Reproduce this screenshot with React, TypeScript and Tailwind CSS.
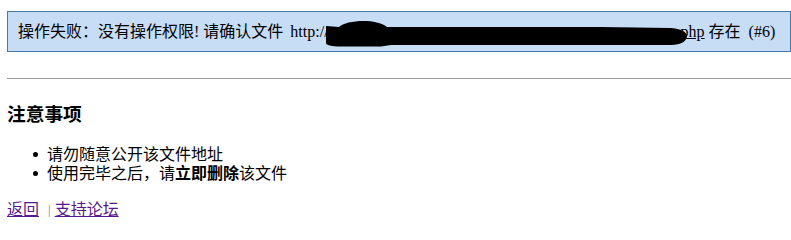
import React from "react";

const FONT = { fontFamily: '"Liberation Serif", "Noto Sans CJK SC", serif' };

export default function App() {
  return (
    <div
      className="w-[791px] h-[232px] overflow-hidden bg-white text-black pl-[7px] pt-[11px] text-[16px]"
      style={FONT}
    >
      <div className="relative w-[784px] h-[41px] border border-[#4a78a3] bg-[#c7dcf5] flex items-center pl-[10px] whitespace-nowrap leading-[20px]">
        <span>操作失败：没有操作权限! 请确认文件</span>
        <span className="ml-[7px]">http://</span>
        <span className="inline-block w-[352px]" />
        <span className="underline">php</span>
        <span className="ml-[4px]">存在</span>
        <span className="ml-[8px]">(#6)</span>
        <svg
          className="absolute left-[313px] top-[7px]"
          width="370"
          height="30"
          viewBox="0 0 370 30"
        >
          <path
            d="M5 7 L18 8 C25 1 55 -1 66 8 L280 8 L350 9 C362 10 366 14 366 17 C366 22 360 26 350 26 L70 26 L60 27.5 L20 27.5 C10 27.5 5 26 5 24 Z"
            fill="#000"
          />
        </svg>
      </div>

      <div className="mt-[26px] w-[784px] h-px bg-[#9a9a9a]" />

      <h3 className="mt-[25px] text-[18.72px] font-bold leading-[22px]">注意事项</h3>

      <ul className="mt-[19px] leading-[19px]">
        <li className="flex items-center">
          <span className="ml-[26px] w-[5px] h-[5px] rounded-full bg-black" />
          <span className="ml-[9px]">请勿随意公开该文件地址</span>
        </li>
        <li className="flex items-center">
          <span className="ml-[26px] w-[5px] h-[5px] rounded-full bg-black" />
          <span className="ml-[9px]">
            使用完毕之后，请<b className="font-bold">立即删除</b>该文件
          </span>
        </li>
      </ul>

      <div className="mt-[17px] leading-[19px] flex items-center whitespace-nowrap">
        <a className="text-[#551a8b] underline">返回</a>
        <span className="ml-[9px] text-[#7a7a8a] text-[13px]">|</span>
        <a className="ml-[4px] text-[#551a8b] underline">支持论坛</a>
      </div>
    </div>
  );
}
